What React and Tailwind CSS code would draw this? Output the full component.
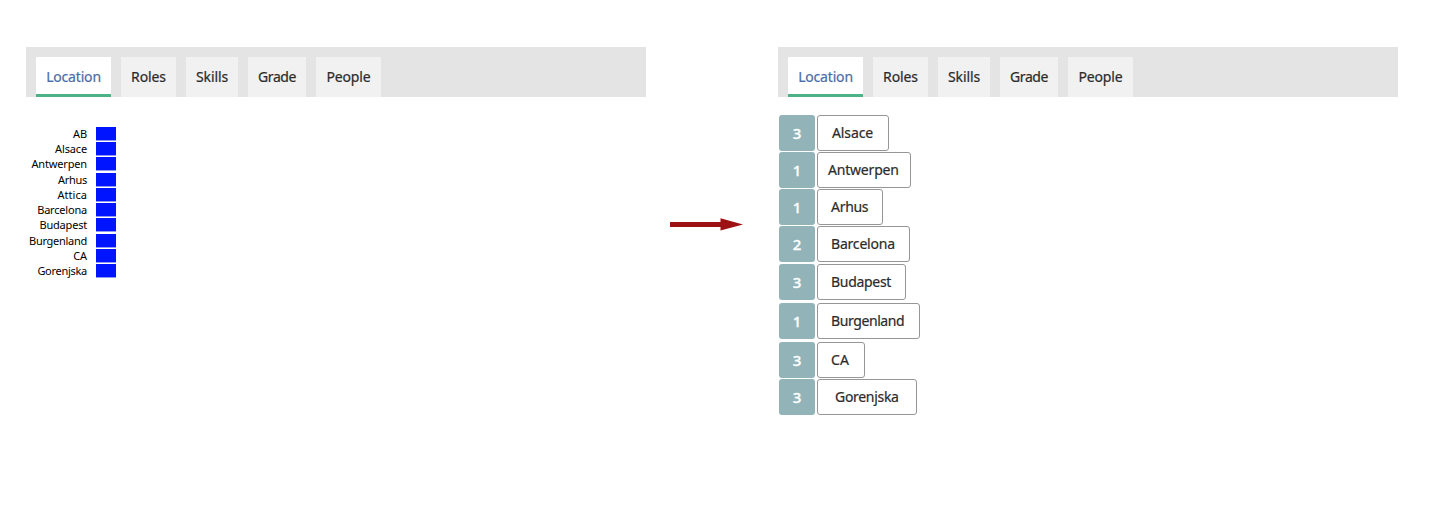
import React from "react";

const tabs = [
  { label: "Location", width: "w-[75px]", tracking: "tracking-[-0.18px]" },
  { label: "Roles", width: "w-[55px]", tracking: "tracking-[-0.1px]" },
  { label: "Skills", width: "w-[52px]", tracking: "tracking-[-0.1px]" },
  { label: "Grade", width: "w-[58px]", tracking: "tracking-[-0.45px]" },
  { label: "People", width: "w-[65px]", tracking: "tracking-[-0.15px]" },
];

const chartRows = [
  { name: "AB", tracking: "tracking-[-0.15px]" },
  { name: "Alsace", tracking: "tracking-[-0.15px]" },
  { name: "Antwerpen", tracking: "tracking-[-0.15px]" },
  { name: "Arhus", tracking: "tracking-[-0.3px]" },
  { name: "Attica", tracking: "tracking-[0.05px]" },
  { name: "Barcelona", tracking: "tracking-[-0.2px]" },
  { name: "Budapest", tracking: "tracking-[-0.2px]" },
  { name: "Burgenland", tracking: "tracking-[-0.28px]" },
  { name: "CA", tracking: "tracking-[-0.1px]" },
  { name: "Gorenjska", tracking: "tracking-[-0.28px]" },
];

const locations = [
  { count: 3, label: "Alsace", row: "h-[37px]", box: "w-[72px] pl-[14px]", text: "tracking-[-0.1px]" },
  { count: 1, label: "Antwerpen", row: "h-[37px]", box: "w-[94px] pl-[10px]", text: "tracking-[-0.2px]" },
  { count: 1, label: "Arhus", row: "h-[37px]", box: "w-[66px] pl-[13px]", text: "tracking-[-0.3px]" },
  { count: 2, label: "Barcelona", row: "h-[38px]", box: "w-[93px] pl-[13px]", text: "tracking-[-0.2px]" },
  { count: 3, label: "Budapest", row: "h-[39px]", box: "w-[89px] pl-[13px]", text: "tracking-[-0.3px]" },
  { count: 1, label: "Burgenland", row: "h-[39px]", box: "w-[103px] pl-[13px]", text: "tracking-[-0.4px]" },
  { count: 3, label: "CA", row: "h-[37px]", box: "w-[48px] pl-[13px]", text: "tracking-[0.2px]" },
  { count: 3, label: "Gorenjska", row: "h-[37px]", box: "w-[100px] pl-[17px]", text: "tracking-[-0.3px]" },
];

function TabBar() {
  return (
    <nav className="flex h-[50px] w-[620px] gap-[10px] bg-[#e4e4e4] pt-[10px] pl-[10px]">
      {tabs.map((tab, i) => (
        <button
          key={tab.label}
          className={`flex h-10 justify-center pt-[10px] text-[14px] leading-5 whitespace-nowrap [-webkit-text-stroke:0.2px] ${tab.width} ${tab.tracking} ${
            i === 0
              ? "border-b-[3px] border-[#4db387] bg-white text-[#4c6ca8]"
              : "bg-[#f1f1f1] text-[#2b2b2b]"
          }`}
        >
          {tab.label}
        </button>
      ))}
    </nav>
  );
}

function Chart() {
  return (
    <div className="mt-[30px] flex flex-col">
      {chartRows.map((row) => (
        <div key={row.name} className="flex h-[15.22px] w-[90px] items-start gap-[9px]">
          <span
            className={`w-[61px] text-right text-[11px] leading-[14px] whitespace-nowrap text-black ${row.tracking}`}
          >
            {row.name}
          </span>
          <span className="h-[14px] w-5 border-b border-[#8f98f5] bg-[#0014ff] bg-clip-padding last:border-b" />
        </div>
      ))}
    </div>
  );
}

function LocationList() {
  return (
    <ul className="mt-[18px] ml-px">
      {locations.map((item) => (
        <li key={item.label} className={`flex items-start gap-[2px] ${item.row}`}>
          <span className="flex size-9 items-center justify-center rounded-[3px] bg-[#92b4b8] pt-px text-[15px] font-medium text-white [-webkit-text-stroke:0.3px]">
            {item.count}
          </span>
          <span
            className={`flex h-9 items-center rounded-[3px] border border-[#969696] pb-[2px] text-[14px] whitespace-nowrap text-[#2b2b2b] [-webkit-text-stroke:0.2px] ${item.box} ${item.text}`}
          >
            {item.label}
          </span>
        </li>
      ))}
    </ul>
  );
}

function Arrow() {
  return (
    <svg className="mt-[171px] h-[13px] w-[73px]" viewBox="0 0 73 13" fill="#9e1113">
      <path d="M0 4H50.5V0.3L73 6.5L50.5 12.5V9H0Z" />
    </svg>
  );
}

export default function App() {
  return (
    <main className="flex h-[516px] w-[1432px] items-start bg-white pt-[47px] pl-[26px] font-['Noto_Sans',sans-serif]">
      <section className="w-[620px]">
        <TabBar />
        <Chart />
      </section>
      <div className="flex w-[132px] pl-6">
        <Arrow />
      </div>
      <section className="w-[620px]">
        <TabBar />
        <LocationList />
      </section>
    </main>
  );
}
